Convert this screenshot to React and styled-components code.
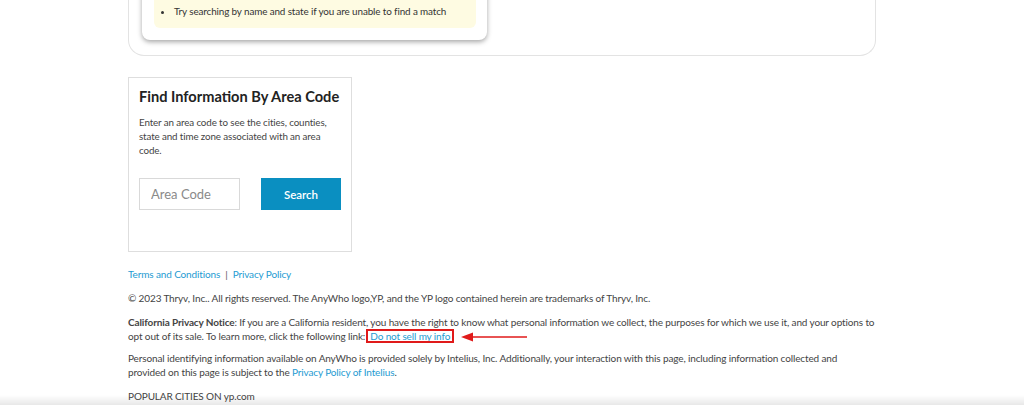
import React from 'react';
import styled, { createGlobalStyle } from 'styled-components';

const Global = createGlobalStyle`
  body {
    margin: 0;
    background: #fff;
    font-family: Lato, 'Liberation Sans', sans-serif;
    color: #444;
    overflow: hidden;
  }
`

const Page = styled.div`
  width: 748px;
  margin-left: 128px;
`
const ResultsPanel = styled.div`
  margin-top: -27px;
  border: 1px solid #e3e3e3;
  border-top: none;
  border-radius: 0 0 16px 16px;
  padding: 0 14px 15px 13px;
`
const TipCard = styled.div`
  width: 345px;
  box-sizing: border-box;
  padding: 0 11px 12px 12px;
  background: #fff;
  border-radius: 0 0 8px 8px;
  box-shadow: 0 2px 5px rgba(0,0,0,0.35);
`
const TipBox = styled.div`
  background: #fefbe2;
  border-radius: 0 0 6px 6px;
  padding: 31px 10px 10px 10px;
`
const TipList = styled.ul`
  margin: 0;
  padding-left: 10px;
  font-size: 9.9px;
  letter-spacing: -0.12px;
  line-height: 14px;
  color: #333;
  li::marker { font-size: 10px; }
`
const AreaCard = styled.div`
  margin-top: 21px;
  width: 224px;
  height: 175px;
  box-sizing: border-box;
  border: 1px solid #dedede;
  padding: 9px 10px 0 10px;
`
const AreaTitle = styled.h2`
  margin: 0;
  font-size: 14.6px;
  line-height: 20px;
  font-weight: 700;
  color: #222;
  white-space: nowrap;
`
const AreaDesc = styled.p`
  margin: 8px 0 0;
  font-size: 9.8px;
  letter-spacing: -0.12px;
  line-height: 14px;
  color: #444;
`
const SearchRow = styled.div`
  display: flex;
  gap: 21px;
  margin-top: 21px;
`
const AreaInput = styled.input`
  width: 101px;
  height: 32px;
  box-sizing: border-box;
  border: 1px solid #d9d9d9;
  padding: 0 11px;
  font-family: inherit;
  font-size: 13px;
  color: #555;
  outline: none;
  &::placeholder { color: #8a8a8a; }
`
const SearchButton = styled.button`
  width: 80px;
  height: 32px;
  border: none;
  background: #0a8fc1;
  color: #fff;
  font-family: inherit;
  font-size: 11.5px;
  font-weight: 600;
`
const Footer = styled.footer`
  margin-top: 15px;
  font-size: 10px;
  letter-spacing: -0.13px;
  line-height: 14px;
  color: #444;
`
const FooterLinks = styled.div`
  display: flex;
  gap: 5px;
  align-items: center;
`
const Sep = styled.span`
  color: #555;
`
const Link = styled.a`
  color: #249bd2;
  text-decoration: none;
  ${p => p.$boxed && `
    outline: 2px solid #e01a1a;
    outline-offset: -1px;
    padding: 0 3px;
    margin-left: 2px;
  `}
`
const Para = styled.p`
  margin: ${p => p.$gap || 10}px 0 0;
`
const Annotated = styled.span`
  position: relative;
`
const Arrow = styled.svg`
  position: absolute;
  left: 96px;
  top: 1px;
`
const Shade = styled.div`
  position: fixed;
  left: 0;
  right: 0;
  bottom: 0;
  height: 10px;
  background: linear-gradient(to bottom, rgba(0,0,0,0), rgba(0,0,0,0.09));
  pointer-events: none;
`

export default function App() {
  return (
    <>
      <Global />
      <Page>
        <ResultsPanel>
          <TipCard>
            <TipBox>
              <TipList>
                <li>Try searching by name and state if you are unable to find a match</li>
              </TipList>
            </TipBox>
          </TipCard>
        </ResultsPanel>

        <AreaCard>
          <AreaTitle>Find Information By Area Code</AreaTitle>
          <AreaDesc>Enter an area code to see the cities, counties, state and time zone associated with an area code.</AreaDesc>
          <SearchRow>
            <AreaInput placeholder="Area Code" />
            <SearchButton>Search</SearchButton>
          </SearchRow>
        </AreaCard>

        <Footer>
          <FooterLinks>
            <Link href="#">Terms and Conditions</Link>
            <Sep>|</Sep>
            <Link href="#">Privacy Policy</Link>
          </FooterLinks>
          <Para $gap={10}>© 2023 Thryv, Inc.. All rights reserved. The AnyWho logo,YP, and the YP logo contained herein are trademarks of Thryv, Inc.</Para>
          <Para>
            <b>California Privacy Notice</b>: If you are a California resident, you have the right to know what personal information we collect, the purposes for which we use it, and your options to opt out of its sale. To learn more, click the following link:
            <Annotated>
              <Link href="#" $boxed>Do not sell my info</Link>
              <Arrow width="70" height="12" viewBox="0 0 70 12">
                <line x1="10" y1="6" x2="66" y2="6" stroke="#e01a1a" strokeWidth="1.6" />
                <polygon points="0,6 12,1.5 12,10.5" fill="#e01a1a" />
              </Arrow>
            </Annotated>
          </Para>
          <Para $gap={8}>Personal identifying information available on AnyWho is provided solely by Intelius, Inc. Additionally, your interaction with this page, including information collected and provided on this page is subject to the <Link href="#">Privacy Policy of Intelius</Link>.</Para>
          <Para $gap={10}>POPULAR CITIES ON yp.com</Para>
        </Footer>
      </Page>
      <Shade />
    </>
  );
}
